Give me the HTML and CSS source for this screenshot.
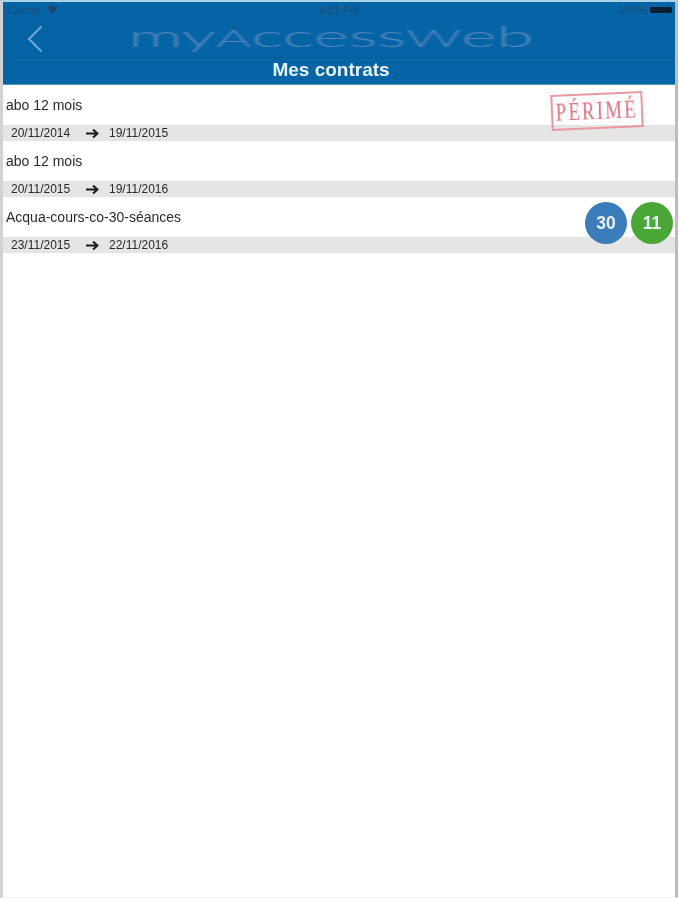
FILE: index.html
```html
<!DOCTYPE html>
<html lang="fr">
<head>
<meta charset="utf-8">
<title>Mes contrats</title>
<link rel="stylesheet" href="styles.css">
</head>
<body>
<div class="screen">
  <header class="header">
    <div class="status">
      <div class="status-left">
        <span>Carrier</span>
        <svg class="wifi" viewBox="0 0 12 9" width="11" height="8"><path d="M0 2.2C3.5-.7 8.500-.7 12 2.200L6 9Z" fill="#1b4a6e"/></svg>
      </div>
      <span class="status-time">4:21 PM</span>
      <div class="status-right">
        <span>100%</span>
        <span class="battery"></span>
      </div>
    </div>
    <div class="brand">
      <svg class="back" viewBox="0 0 16 28" width="16" height="28"><path d="M14.500 1.500 2 14l12.500 12.500" fill="none" stroke="#6fa3d0" stroke-width="2.200"/></svg>
      <span class="logo">my<span class="logo-cap">A</span>ccess<span class="logo-cap">W</span>eb</span>
    </div>
    <h1 class="title">Mes contrats</h1>
  </header>
  <main class="list">
    <section class="contract">
      <div class="contract-name">abo 12 mois</div>
      <div class="contract-dates">
        <span class="date">20/11/2014</span>
        <svg class="arrow" viewBox="0 0 16 12" width="14" height="11"><path d="M0 6h12M8 1.500 13 6l-5 4.500" fill="none" stroke="#1c1c1c" stroke-width="2.400"/></svg>
        <span class="date">19/11/2015</span>
      </div>
      <div class="stamp"><span class="stamp-text">PÉRIMÉ</span></div>
    </section>
    <section class="contract">
      <div class="contract-name">abo 12 mois</div>
      <div class="contract-dates">
        <span class="date">20/11/2015</span>
        <svg class="arrow" viewBox="0 0 16 12" width="14" height="11"><path d="M0 6h12M8 1.500 13 6l-5 4.500" fill="none" stroke="#1c1c1c" stroke-width="2.400"/></svg>
        <span class="date">19/11/2016</span>
      </div>
    </section>
    <section class="contract">
      <div class="contract-name">Acqua-cours-co-30-séances</div>
      <div class="contract-dates">
        <span class="date">23/11/2015</span>
        <svg class="arrow" viewBox="0 0 16 12" width="14" height="11"><path d="M0 6h12M8 1.500 13 6l-5 4.500" fill="none" stroke="#1c1c1c" stroke-width="2.400"/></svg>
        <span class="date">22/11/2016</span>
      </div>
      <div class="badges">
        <span class="badge badge-blue">30</span>
        <span class="badge badge-green">11</span>
      </div>
    </section>
  </main>
</div>
</body>
</html>
```
FILE: styles.css
```css
* { box-sizing: border-box; }
html, body { margin: 0; height: 100%; background: #fff; }
body {
  font-family: "Liberation Sans", Arial, sans-serif;
  color: #222;
  overflow: hidden;
}
.screen {
  width: 678px;
  height: 898px;
  background: #fff;
  border-left: 3px solid #d2d2d2;
  border-right: 3px solid #bcbcbc;
  border-top: 2px solid #a9d3e6;
  border-bottom: 1px solid #f1f1f1;
  display: flex;
  flex-direction: column;
}
.header {
  height: 83px;
  flex: none;
  background: #0564a6;
  border-bottom: 1px solid #5c98c0;
  display: flex;
  flex-direction: column;
}
.status {
  height: 18px;
  flex: none;
  padding: 0 3px 3px 5px;
  display: flex;
  align-items: center;
  justify-content: space-between;
  position: relative;
  font-size: 11px;
  color: #1a4a72;
  filter: blur(0.4px);
}
.status-left, .status-right { display: flex; align-items: center; gap: 5px; }
.status-right { gap: 3px; }
.status-time { position: absolute; left: 0; right: 0; text-align: center; top: 2px; }
.battery { width: 22px; height: 6px; background: #0c1f33; border-radius: 1px; }
.brand {
  height: 38px;
  flex: none;
  position: relative;
  display: flex;
  align-items: center;
  justify-content: center;
  border-bottom: 1px solid #0a5c97;
  padding: 0 16px 4px 0;
}
.back { position: absolute; left: 24px; top: 5px; filter: blur(0.4px); }
.logo {
  font-family: "Lato", "DejaVu Sans", sans-serif;
  font-weight: 300;
  font-size: 30px;
  line-height: 30px;
  color: #5585bb;
  white-space: nowrap;
  transform: scaleX(2.250);
  filter: blur(0.6px);
}
.logo-cap { font-size: 24px; }
.title {
  margin: 0;
  flex: 1;
  display: flex;
  align-items: center;
  justify-content: center;
  padding: 0 16px 3px 0;
  font-size: 19px;
  font-weight: 700;
  color: #e8f1f7;
  filter: blur(0.3px);
}
.list { flex: 1; }
.contract { position: relative; }
.contract-name {
  height: 40px;
  padding: 12px 0 0 3px;
  font-size: 14px;
  line-height: 16px;
  color: #2a2a2a;
  filter: blur(0.3px);
}
.contract-dates {
  height: 16px;
  background: #e5e5e5;
  padding-left: 8px;
  display: flex;
  align-items: center;
  font-size: 12px;
  color: #2a2a2a;
}
.date { white-space: nowrap; filter: blur(0.3px); }
.date:first-child { width: 75px; }
.arrow { margin-right: 9px; flex: none; filter: blur(0.3px); }
.stamp {
  position: absolute;
  left: 548px;
  top: 8px;
  width: 92px;
  height: 36px;
  border: 2px solid #ea979e;
  transform: rotate(-2.500deg);
  display: flex;
  align-items: center;
  justify-content: center;
  filter: blur(0.5px);
}
.stamp-text {
  font-family: "Liberation Serif", serif;
  font-size: 25px;
  line-height: 28px;
  letter-spacing: 3px;
  color: #e0707e;
  transform: scaleX(0.750);
  white-space: nowrap;
}
.badges {
  position: absolute;
  left: 582px;
  top: 5px;
  display: flex;
  gap: 4px;
}
.badge {
  width: 42px;
  height: 42px;
  border-radius: 50%;
  display: flex;
  align-items: center;
  justify-content: center;
  font-size: 17.500px;
  font-weight: 700;
  color: #e6f0f4;
  filter: blur(0.3px);
}
.badge-blue { background: #3b7dbb; }
.badge-green { background: #4aa637; }
```
